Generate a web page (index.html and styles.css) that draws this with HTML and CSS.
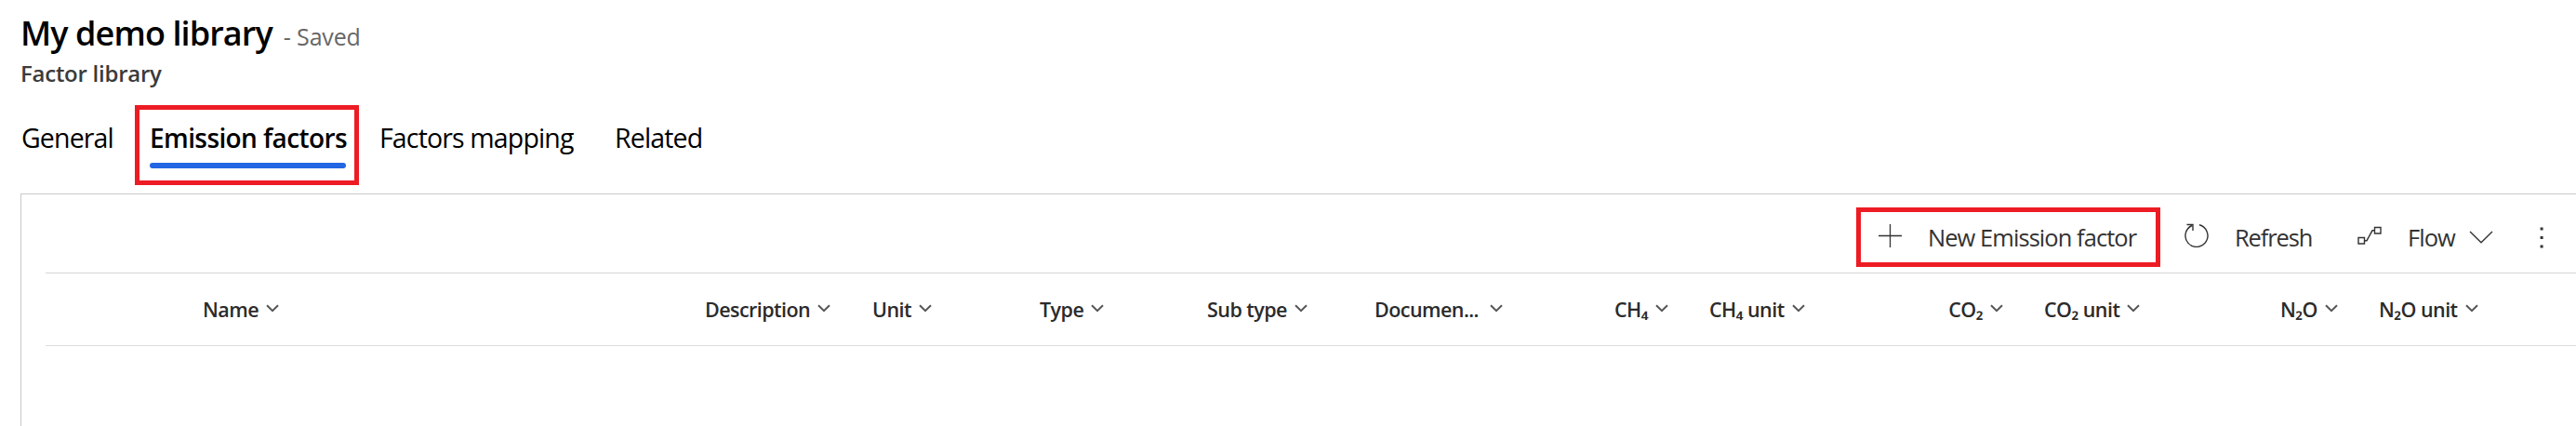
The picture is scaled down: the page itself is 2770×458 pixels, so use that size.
FILE: index.html
```
<!DOCTYPE html>
<html lang="en">
<head>
<meta charset="utf-8">
<title>My demo library</title>
<link rel="stylesheet" href="styles.css">
</head>
<body>
<svg class="defs" width="0" height="0" aria-hidden="true">
  <symbol id="caret" viewBox="0 0 14 10"><path d="M1 1.2 7 7.2 13 1.2" fill="none" stroke="#555" stroke-width="2"/></symbol>
</svg>
<header class="head">
  <div class="title-row"><h1 class="title">My demo library</h1><span class="saved">- Saved</span></div>
  <div class="subtitle">Factor library</div>
</header>
<nav class="tabs">
  <a class="tab general">General</a>
  <a class="tab active">Emission factors</a>
  <a class="tab mapping">Factors mapping</a>
  <a class="tab">Related</a>
</nav>
<section class="panel">
  <div class="toolbar">
    <button class="cmd new">
      <svg width="26" height="26" viewBox="0 0 26 26"><path d="M1 13.5H26M13.5 1V26" fill="none" stroke="#333" stroke-width="1.3"/></svg>
      <span>New Emission factor</span>
    </button>
    <button class="cmd refresh">
      <svg width="26" height="26" viewBox="0 0 26 26"><path d="M16 1.8A12 12 0 1 1 8 2.5M2.5 1.5H9V8" fill="none" stroke="#333" stroke-width="1.4"/></svg>
      <span>Refresh</span>
    </button>
    <button class="cmd flow">
      <svg width="26" height="26" viewBox="0 0 26 26"><path d="M1 15.5H7.5V22H1ZM18.5 4.5H25V11H18.5ZM7.5 18.7H10L16 7.8H18.5" fill="none" stroke="#333" stroke-width="1.4"/></svg>
      <span>Flow</span>
      <svg class="chevron" width="26" height="14" viewBox="0 0 26 14"><path d="M1 1 13 12.8 25 1" fill="none" stroke="#333" stroke-width="1.4"/></svg>
    </button>
    <button class="more"><svg width="6" height="26" viewBox="0 0 6 26"><path d="M1.6 2.5h3v3h-3zM1.6 12h3v3h-3zM1.6 21.4h3v3h-3z" fill="#333"/></svg></button>
  </div>
  <div class="columns">
    <div class="col">Name<svg class="caret"><use href="#caret"/></svg></div>
    <div class="col">Description<svg class="caret"><use href="#caret"/></svg></div>
    <div class="col">Unit<svg class="caret"><use href="#caret"/></svg></div>
    <div class="col">Type<svg class="caret"><use href="#caret"/></svg></div>
    <div class="col">Sub type<svg class="caret"><use href="#caret"/></svg></div>
    <div class="col clipped">Documen...<svg class="caret"><use href="#caret"/></svg></div>
    <div class="col num">CH₄<svg class="caret"><use href="#caret"/></svg></div>
    <div class="col">CH₄ unit<svg class="caret"><use href="#caret"/></svg></div>
    <div class="col num">CO₂<svg class="caret"><use href="#caret"/></svg></div>
    <div class="col">CO₂ unit<svg class="caret"><use href="#caret"/></svg></div>
    <div class="col num">N₂O<svg class="caret"><use href="#caret"/></svg></div>
    <div class="col">N₂O unit<svg class="caret"><use href="#caret"/></svg></div>
  </div>
</section>
</body>
</html>
```
FILE: styles.css
```
*, *::before, *::after { box-sizing: border-box; }
body {
  margin: 0;
  height: 458px;
  display: flex;
  flex-direction: column;
  overflow: hidden;
  background: #fff;
  color: #000;
  font-family: "Open Sans", "Noto Sans", sans-serif;
}
.defs { position: absolute; }
.head { padding: 16px 0 0 22px; }
.title-row { display: flex; align-items: baseline; height: 40px; }
.title { margin: 0; font-size: 36px; line-height: 40px; font-weight: 600; letter-spacing: -0.9px; }
.saved { margin-left: 12px; font-size: 25px; line-height: 30px; color: #666; letter-spacing: -0.15px; }
.subtitle { margin-top: 8px; font-size: 24px; line-height: 30px; font-weight: 600; color: #3b3b3b; letter-spacing: -0.25px; }

.tabs { display: flex; margin-top: 33px; padding-left: 23px; height: 54px; font-size: 28.5px; line-height: 42px; letter-spacing: -0.85px; white-space: nowrap; }
.tab { height: 54px; }
.general { width: 138px; }
.mapping { width: 253px; }
.active { position: relative; width: 211px; margin-right: 36px; font-size: 28px; font-weight: 600; letter-spacing: -0.6px; }
.active::after { content: ""; display: block; height: 6px; margin-top: 6px; border-radius: 3px; background: #2266e3; }
.active::before { content: ""; position: absolute; left: -16px; top: -14px; width: 241px; height: 86px; border: 5px solid #ed1c24; }

.panel { flex: 1; margin: 27px 0 0 22px; padding-left: 26px; border-left: 1px solid #c8c8c8; border-top: 1px solid #c8c8c8; }
.toolbar { display: flex; align-items: center; justify-content: flex-end; height: 85px; padding-right: 31px; border-bottom: 1px solid #d6d6d6; }
.cmd, .more { display: flex; align-items: center; flex: none; height: 64px; margin-top: 8px; padding: 0; border: 0; background: none; color: #333; font: 25.5px/34px "Open Sans", "Noto Sans", sans-serif; letter-spacing: -0.95px; white-space: nowrap; }
.cmd svg { flex: none; margin-right: 28px; margin-top: -4px; }
.cmd .chevron { margin: 0 0 0 15px; }
.new { width: 327px; padding-left: 18px; border: 5px solid #ed1c24; }
.refresh { width: 186px; padding-left: 26px; letter-spacing: -1.15px; }
.flow { width: 209px; padding-left: 26px; justify-content: flex-start; }
.more { width: 21px; padding-left: 12px; }

.columns { display: grid; grid-template-columns: 540px repeat(11, 180px); align-items: center; height: 78px; padding-left: 169px; border-bottom: 1px solid #dcdcdc; color: #2b2b2b; font-size: 21.5px; line-height: 30px; font-weight: 600; letter-spacing: -0.55px; white-space: nowrap; }
.col { display: flex; align-items: center; }
.caret { width: 14px; height: 10px; margin: -2px 0 0 8px; }
.clipped .caret { margin-left: 12px; }
.num { justify-content: flex-end; padding-right: 44px; }
```
